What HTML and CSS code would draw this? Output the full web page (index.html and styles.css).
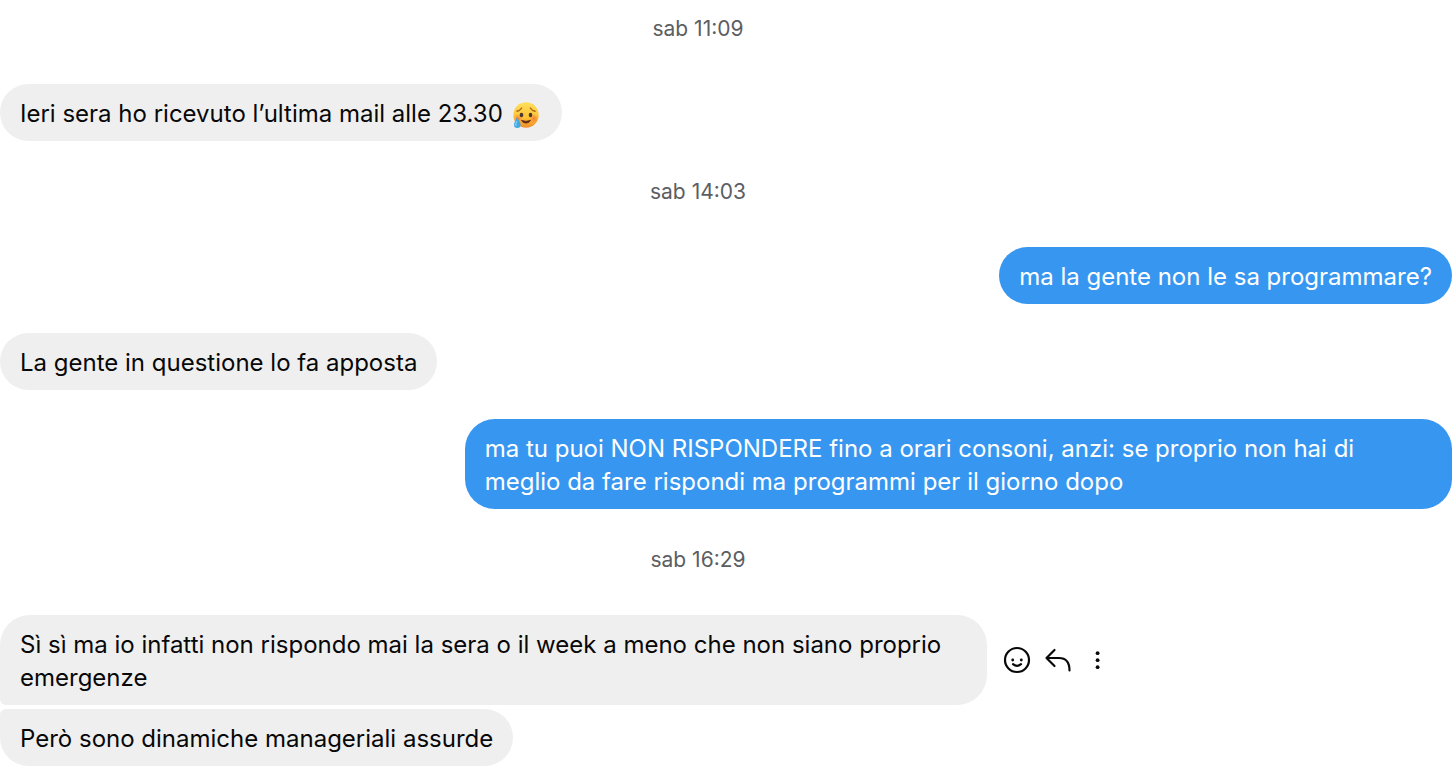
FILE: index.html
```html
<!DOCTYPE html>
<html lang="it">
<head>
    <meta charset="UTF-8">
    <meta name="viewport" content="width=device-width, initial-scale=1.0">
    <title>Chat</title>
    <link rel="stylesheet" href="styles.css">
</head>
<body>
    <main class="chat">
        <time class="timestamp">sab 11:09</time>
        <div class="row">
            <p class="bubble">Ieri sera ho ricevuto l’ultima mail alle 23.30
                <svg class="emoji" viewBox="0 0 28 28" role="img" aria-label="faccina triste ma sollevata">
                    <defs>
                        <linearGradient id="face" x2="0" y2="1">
                            <stop offset="0" stop-color="#ffe05a"/>
                            <stop offset="0.6" stop-color="#fdc235"/>
                            <stop offset="1" stop-color="#f08c2c"/>
                        </linearGradient>
                        <radialGradient id="blush">
                            <stop offset="0" stop-color="#f2643c" stop-opacity="0.7"/>
                            <stop offset="1" stop-color="#f2643c" stop-opacity="0"/>
                        </radialGradient>
                    </defs>
                    <circle cx="14" cy="14" r="12.7" fill="url(#face)"/>
                    <circle cx="6" cy="17.5" r="4.5" fill="url(#blush)"/>
                    <circle cx="22" cy="17.5" r="4.5" fill="url(#blush)"/>
                    <ellipse cx="9.5" cy="14" rx="1.8" ry="2.2" fill="#4c3a30"/>
                    <ellipse cx="18.5" cy="14" rx="1.8" ry="2.2" fill="#4c3a30"/>
                    <path d="M5 10.3q3-.6 4.7-3.3M23 10.3q-3-.6-4.7-3.3" fill="none" stroke="#a8641a" stroke-width="1.4" stroke-linecap="round"/>
                    <path d="M9.5 19.3q4.500 2 9 0q-1 2.800-4.500 2.800t-4.500-2.800z" fill="#642c18" stroke="#642c18" stroke-width="0.8" stroke-linejoin="round"/>
                    <path d="M5 16C4 19.500 2 21 2 23.700a3.300 3.300 0 0 0 6.600 0C8.600 21 6.500 19.500 5 16z" fill="#3fa9e6"/>
                    <path d="M4.700 20.500q-1.400 2-.8 4" fill="none" stroke="#a4def8" stroke-linecap="round"/>
                </svg>
            </p>
        </div>
        <time class="timestamp">sab 14:03</time>
        <div class="row sent">
            <p class="bubble">ma la gente non le sa programmare?</p>
        </div>
        <div class="row">
            <p class="bubble">La gente in questione lo fa apposta</p>
        </div>
        <div class="row sent">
            <p class="bubble">ma tu puoi NON RISPONDERE fino a orari consoni, anzi: se proprio non hai di meglio da fare rispondi ma programmi per il giorno dopo</p>
        </div>
        <time class="timestamp">sab 16:29</time>
        <div class="row grouped">
            <p class="bubble first">Sì sì ma io infatti non rispondo mai la sera o il week a meno che non siano proprio emergenze</p>
            <div class="actions">
                <button type="button" aria-label="Reagisci">
                    <svg viewBox="0 0 28 28">
                        <circle cx="14" cy="14" r="12"/>
                        <path d="M10 18.2q4 3.4 8 0"/>
                        <circle class="dot" cx="9.7" cy="14" r="1.4"/>
                        <circle class="dot" cx="18.3" cy="14" r="1.4"/>
                    </svg>
                </button>
                <button type="button" aria-label="Rispondi">
                    <svg viewBox="0 0 28 28">
                        <path d="M11.500 4L3.500 12l8 8M3.500 12h12.500q10.500 0 10.500 12.500"/>
                    </svg>
                </button>
                <button type="button" aria-label="Altro">
                    <svg viewBox="0 0 28 28">
                        <circle class="dot" cx="14.6" cy="7.2" r="1.9"/>
                        <circle class="dot" cx="14.6" cy="14.2" r="1.9"/>
                        <circle class="dot" cx="14.6" cy="21.2" r="1.9"/>
                    </svg>
                </button>
            </div>
        </div>
        <div class="row">
            <p class="bubble last">Però sono dinamiche manageriali assurde</p>
        </div>
    </main>
</body>
</html>
```
FILE: styles.css
```css
body {
    margin: 0;
    background-color: #fff;
    color: #080809;
    font-family: Inter, "Liberation Sans", sans-serif;
    font-size: 24px;
    line-height: 33px;
}

.chat {
    display: flex;
    flex-direction: column;
    padding: 15px 4px 0 0;
}

.timestamp {
    padding-right: 56px;
    text-align: center;
    color: #5b5e62;
    font-size: 21px;
    line-height: 28px;
}

.row {
    display: flex;
    align-items: center;
    margin-bottom: 29px;
}

.timestamp + .row {
    margin-top: 41px;
}

.row + .timestamp {
    margin-top: 8px;
}

.sent {
    justify-content: flex-end;
}

.row.grouped {
    margin-bottom: 4px;
}

.bubble {
    box-sizing: border-box;
    max-width: 68%;
    margin: 0;
    padding: 13px 20px 11px;
    border-radius: 30px;
    background-color: #efefef;
}

.sent .bubble {
    background-color: #3797f0;
    color: #fff;
}

.bubble.first {
    border-bottom-left-radius: 6px;
}

.bubble.last {
    border-top-left-radius: 6px;
}

.emoji {
    width: 28px;
    height: 28px;
    margin: 0 2px;
    vertical-align: -7px;
}

.actions {
    display: flex;
    gap: 12px;
    margin-left: 16px;
}

.actions button {
    padding: 0;
    border: 0;
    background: none;
    cursor: pointer;
}

.actions svg {
    display: block;
    width: 28px;
    height: 28px;
    fill: none;
    stroke: #080809;
    stroke-width: 2.2;
    stroke-linecap: round;
    stroke-linejoin: round;
}

.actions .dot {
    fill: #080809;
    stroke: none;
}
```
